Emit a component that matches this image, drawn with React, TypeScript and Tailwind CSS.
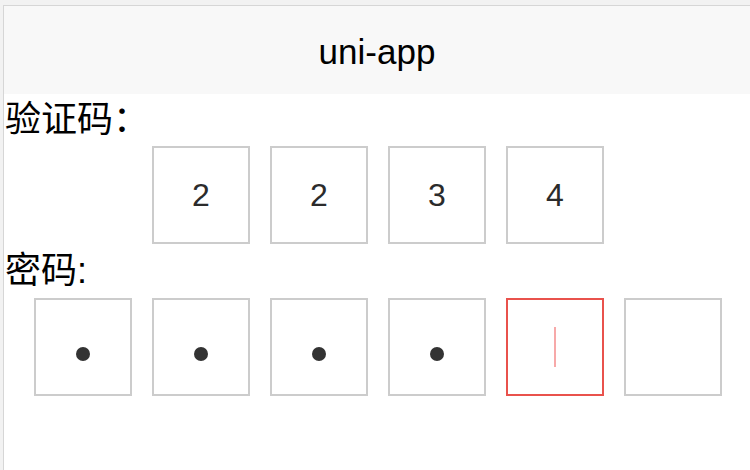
import React from 'react';

const font = { fontFamily: '"Liberation Sans", "Noto Sans CJK SC", sans-serif' };

const code = ['2', '2', '3', '4'];
const filled = 4;
const total = 6;

const Box: React.FC<{ active?: boolean; children?: React.ReactNode }> = ({ active, children }) => (
  <div
    className={`w-[98px] h-[98px] mx-[10px] border-2 flex items-center justify-center ${
      active ? 'border-[#e9524c]' : 'border-[#cccccc]'
    }`}
  >
    {children}
  </div>
);

export default function App() {
  return (
    <div className="w-[750px] h-[470px] bg-[#f2f2f2] pt-[5px] pl-[3px] overflow-hidden" style={font}>
      <div className="h-full bg-white border-t border-l border-[#d6d6d6]">
        <div className="h-[88px] bg-[#f8f8f8] flex items-center justify-center pt-[4px] text-[35px] text-black">
          uni-app
        </div>

        <div className="h-[52px] flex items-center pl-[1px] text-[36px] text-black">验证码：</div>
        <div className="flex justify-center pl-[2px]">
          {code.map((c, i) => (
            <Box key={i}>
              <span className="text-[32px] text-[#2b2b2b]">{c}</span>
            </Box>
          ))}
        </div>

        <div className="h-[54px] flex items-center pl-[1px] text-[36px] text-black">密码:</div>
        <div className="flex justify-center pl-[2px]">
          {Array.from({ length: total }).map((_, i) => (
            <Box key={i} active={i === filled}>
              {i < filled && <span className="w-[14px] h-[14px] mt-[14px] rounded-full bg-[#333333]" />}
              {i === filled && <span className="w-[2px] h-[40px] bg-[#f7a9a9]" />}
            </Box>
          ))}
        </div>
      </div>
    </div>
  );
}
